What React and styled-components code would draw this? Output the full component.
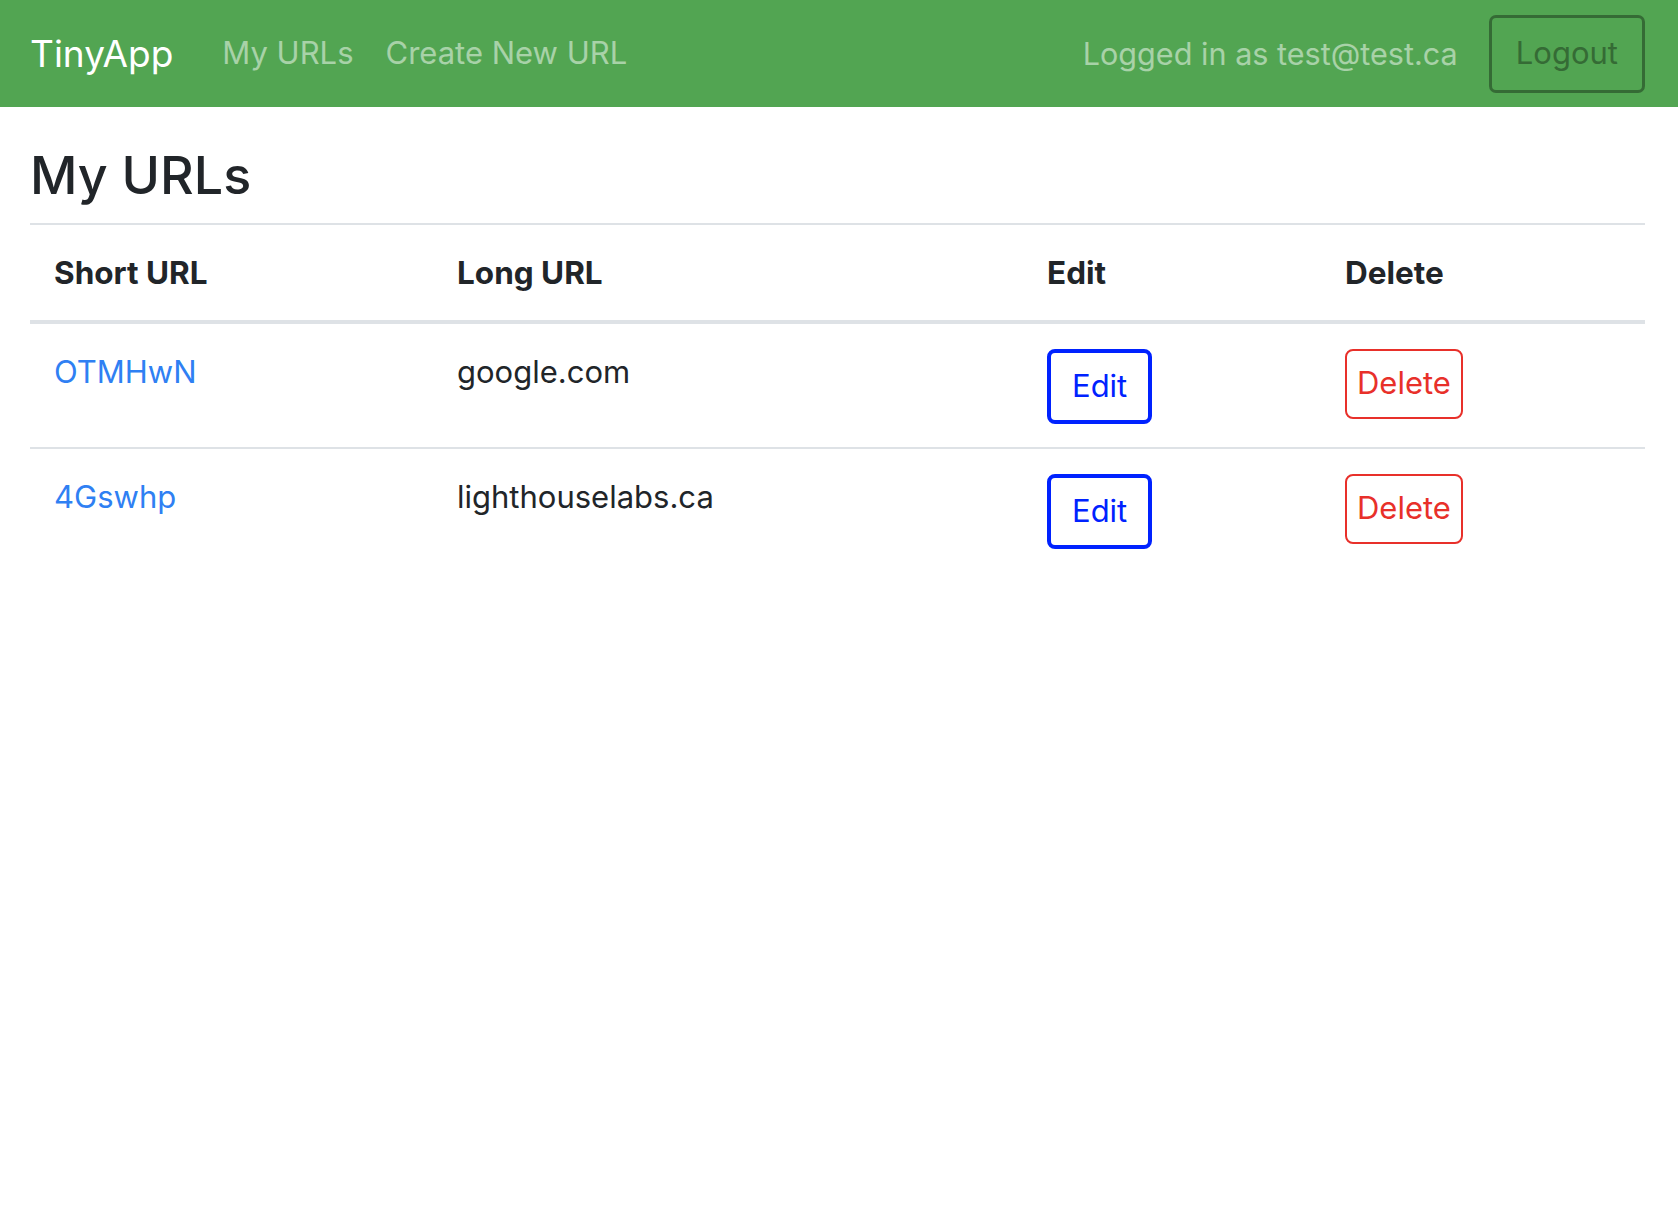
import React from "react"
import styled, { createGlobalStyle } from "styled-components"

const GlobalStyle = createGlobalStyle`
    body {
        margin: 0;
        background: #fff;
        font-family: Inter, "Noto Sans", sans-serif;
        color: #212529;
        font-size: 31px;
        line-height: 1.5;
    }
`

const Nav = styled.nav`
    background: #52a552;
    height: 107px;
    display: flex;
    align-items: center;
    padding: 0 33px 0 30px;
    box-sizing: border-box;
`
const Brand = styled.a`
    color: #fff;
    font-size: 37px;
    margin-right: 33px;
    text-decoration: none;
`
const NavLink = styled.a`
    color: rgba(255, 255, 255, 0.5);
    padding: 0 16px;
    text-decoration: none;
`
const Spacer = styled.div`
    flex: 1;
`
const UserText = styled.span`
    color: rgba(255, 255, 255, 0.5);
    font-size: 30.6px;
    margin-right: 31px;
`
const LogoutButton = styled.button`
    font: inherit;
    color: #356b35;
    background: transparent;
    border: 3px solid #356b35;
    border-radius: 7px;
    height: 78px;
    padding: 0 24px;
`
const Main = styled.main`
    padding: 38px 33px 0 30px;
`
const Heading = styled.h1`
    font-size: 52px;
    font-weight: 500;
    line-height: 1.2;
    margin: 0 0 16px;
`
const Table = styled.table`
    width: 100%;
    border-collapse: collapse;
`
const Th = styled.th`
    text-align: left;
    font-weight: 700;
    font-size: 31.5px;
    padding: 24px 24px 23px;
    border-top: 2px solid #dee2e6;
    border-bottom: 4px solid #dee2e6;
    width: ${p => p.$w};
`
const Td = styled.td`
    vertical-align: top;
    padding: 25px 24px 23px;
    border-top: ${p => (p.$first ? "none" : "2px solid #dee2e6")};
`
const ShortLink = styled.a`
    color: #2f80f3;
    text-decoration: none;
`
const ActionButton = styled.button`
    font: inherit;
    background: #fff;
    border-radius: 8px;
    padding: 0 ${p => (p.$danger ? "10px" : "21px")};
    height: ${p => (p.$danger ? "70px" : "75px")};
    color: ${p => (p.$danger ? "#e8302a" : "#0022ff")};
    border: ${p => (p.$danger ? "2px solid #e8302a" : "4px solid #0022ff")};
`

const urls = [
    { short: "OTMHwN", long: "google.com" },
    { short: "4Gswhp", long: "lighthouselabs.ca" },
]

const App = () => {
    return (
        <>
            <GlobalStyle />
            <Nav>
                <Brand href="#">TinyApp</Brand>
                <NavLink href="#">My URLs</NavLink>
                <NavLink href="#">Create New URL</NavLink>
                <Spacer />
                <UserText>Logged in as test@test.ca</UserText>
                <LogoutButton>Logout</LogoutButton>
            </Nav>
            <Main>
                <Heading>My URLs</Heading>
                <Table>
                    <thead>
                        <tr>
                            <Th $w="355px">Short URL</Th>
                            <Th $w="542px">Long URL</Th>
                            <Th $w="250px">Edit</Th>
                            <Th>Delete</Th>
                        </tr>
                    </thead>
                    <tbody>
                        {urls.map((u, i) => (
                            <tr key={u.short}>
                                <Td $first={i === 0}><ShortLink href="#">{u.short}</ShortLink></Td>
                                <Td $first={i === 0}>{u.long}</Td>
                                <Td $first={i === 0}><ActionButton>Edit</ActionButton></Td>
                                <Td $first={i === 0}><ActionButton $danger>Delete</ActionButton></Td>
                            </tr>
                        ))}
                    </tbody>
                </Table>
            </Main>
        </>
    )
}

export default App
